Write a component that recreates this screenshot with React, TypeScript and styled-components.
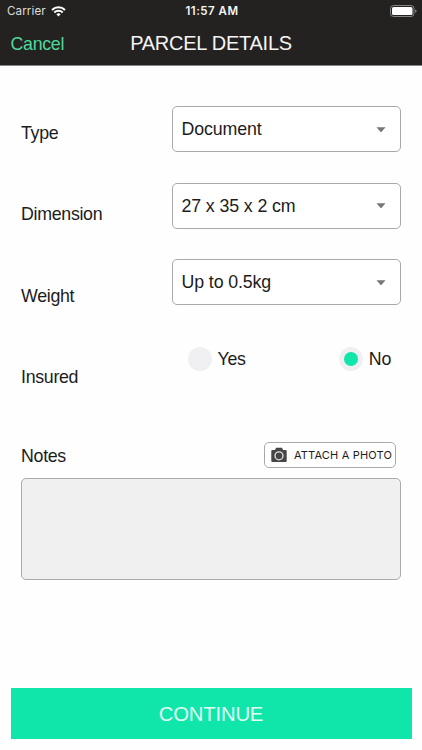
import React from "react";
import styled, { createGlobalStyle } from "styled-components";

const GlobalStyle = createGlobalStyle`
  * { box-sizing: border-box; }
  body {
    margin: 0;
    background: #fefefe;
    color: #1c1c1c;
    font-family: "Liberation Sans", Arial, sans-serif;
    font-size: 17.8px;
    letter-spacing: -0.3px;
  }
  button, textarea { font: inherit; color: inherit; letter-spacing: inherit; }
  svg { flex: none; }
`;

const Screen = styled.div`
  width: 422px;
  height: 750px;
  display: flex;
  flex-direction: column;
  overflow: hidden;
`;

const Header = styled.header`
  height: 66px;
  flex: none;
  background: #232221;
  border-bottom: 1px solid #858585;
  color: #f4f4f4;
`;

const StatusBar = styled.div`
  height: 22px;
  padding: 0 5px 0 7px;
  display: grid;
  grid-template-columns: 1fr auto 1fr;
  align-items: center;
  font-family: Inter, sans-serif;
  font-size: 11.6px;
`;

const Carrier = styled.div`
  display: flex;
  align-items: center;
  gap: 5px;
  letter-spacing: 0.1px;
  color: #dedede;
`;

const Time = styled.div`
  font-size: 11.5px;
  font-weight: 600;
  letter-spacing: 0.5px;
`;

const BatteryIcon = styled.svg`
  justify-self: end;
  display: block;
`;

const NavBar = styled.div`
  height: 43px;
  padding: 0 10px;
  display: grid;
  grid-template-columns: 1fr auto 1fr;
  align-items: center;
`;

const Cancel = styled.button`
  justify-self: start;
  padding: 1px 0 0 0.5px;
  border: 0;
  background: none;
  color: #50d79c;
`;

const Title = styled.h1`
  margin: 0;
  font-size: 20px;
  font-weight: 400;
  letter-spacing: -0.25px;
  white-space: nowrap;
`;

const Form = styled.main`
  flex: 1;
  padding: 40px 21px 0;
`;

const Columns = styled.div`
  height: 324px;
  display: grid;
  grid-template-columns: 150.5px 229.5px;
`;

const Labels = styled.div`
  display: grid;
  grid-auto-rows: 81.5px;
  align-content: start;
  padding-top: 16.6px;
  line-height: 20px;
`;

const Fields = styled.div`
  display: flex;
  flex-direction: column;
  gap: 30.5px;
  letter-spacing: -0.12px;
`;

const Select = styled.button`
  height: 46px;
  flex: none;
  padding: 1px 14px 0 9px;
  display: flex;
  align-items: center;
  justify-content: space-between;
  border: 1px solid #a9a9a9;
  border-radius: 5px;
  background: #fff;
  text-align: left;
`;

const RadioGroup = styled.div`
  display: flex;
  justify-content: space-between;
  padding: 0 10px 0 16px;
  margin-top: 10.5px;
`;

const Radio = styled.label`
  display: flex;
  align-items: center;
  gap: 6px;
  line-height: 26px;
  letter-spacing: -0.3px;
`;

const Dot = styled.span<{ $checked?: boolean }>`
  width: 24px;
  height: 24px;
  border-radius: 50%;
  border: 5px solid #f0f0f2;
  background: ${(p) => (p.$checked ? "#10e6aa" : "#f0f0f2")};
`;

const NotesHeader = styled.div`
  height: 48px;
  padding: 12px 5px 0 0;
  display: flex;
  align-items: flex-start;
  justify-content: space-between;
`;

const NotesLabel = styled.label`
  line-height: 28px;
`;

const AttachButton = styled.button`
  width: 132px;
  height: 26px;
  padding: 0 0 0 6px;
  display: flex;
  align-items: center;
  gap: 7px;
  border: 1px solid #aaa;
  border-radius: 5px;
  background: #fff;
  font-family: Inter, sans-serif;
  font-size: 11px;
  letter-spacing: 0.18px;
  white-space: nowrap;
`;

const Notes = styled.textarea`
  display: block;
  width: 380px;
  height: 102px;
  border: 1px solid #aaa;
  border-radius: 5px;
  background: #f0f0f0;
  resize: none;
`;

const Continue = styled.button`
  flex: none;
  height: 51px;
  margin: 0 10.5px 11px;
  padding: 2px 0 0;
  border: 0;
  background: #10e6aa;
  color: #e2fff4;
  font-size: 20.3px;
  letter-spacing: -0.2px;
`;

const Caret = () => (
  <svg width="10" height="6" viewBox="0 0 10 6">
    <path d="M0.5 0.3H9.5L5.6 4.8Q5 5.4 4.4 4.8Z" fill="#777" />
  </svg>
);

const Wifi = () => (
  <svg width="15" height="11" viewBox="0 0 15 11" fill="none" stroke="#fff" strokeWidth="2">
    <path d="M1 4A9.2 9.2 0 0 1 14 4M3.3 6.5A6 6 0 0 1 11.7 6.5" />
    <path d="M7.5 10.5L5.4 8.3A3 3 0 0 1 9.6 8.3Z" fill="#fff" stroke="none" />
  </svg>
);

const Battery = () => (
  <BatteryIcon width="27" height="12" viewBox="0 0 27 12">
    <rect x="0.5" y="0.5" width="23.5" height="11" rx="3" fill="none" stroke="#858585" />
    <rect x="2" y="2" width="20.5" height="8" rx="1.5" fill="#fff" />
    <path d="M25.2 4.2Q26.6 4.6 26.6 6T25.2 7.8Z" fill="#858585" />
  </BatteryIcon>
);

const Camera = () => (
  <svg width="16" height="16" viewBox="0 0 16 16">
    <path d="M1.4 3H4L5 0.7H11L12 3H14.6Q15.7 3 15.7 4.1V13.9Q15.7 15 14.6 15H1.4Q0.3 15 0.3 13.9V4.1Q0.3 3 1.4 3Z" fill="#464646" />
    <circle cx="8" cy="8.8" r="4" fill="#464646" stroke="#e4e4e4" strokeWidth="1.3" />
  </svg>
);

export default function App() {
  return (
    <Screen>
      <GlobalStyle />
      <Header>
        <StatusBar>
          <Carrier>Carrier <Wifi /></Carrier>
          <Time>11:57 AM</Time>
          <Battery />
        </StatusBar>
        <NavBar>
          <Cancel>Cancel</Cancel>
          <Title>PARCEL DETAILS</Title>
        </NavBar>
      </Header>
      <Form>
        <Columns>
          <Labels>
            {["Type", "Dimension", "Weight", "Insured"].map((name) => (
              <span key={name}>{name}</span>
            ))}
          </Labels>
          <Fields>
            {["Document", "27 x 35 x 2 cm", "Up to 0.5kg"].map((value) => (
              <Select key={value}>{value}<Caret /></Select>
            ))}
            <RadioGroup>
              <Radio><Dot />Yes</Radio>
              <Radio><Dot $checked />No</Radio>
            </RadioGroup>
          </Fields>
        </Columns>
        <NotesHeader>
          <NotesLabel htmlFor="notes">Notes</NotesLabel>
          <AttachButton><Camera />ATTACH A PHOTO</AttachButton>
        </NotesHeader>
        <Notes id="notes" />
      </Form>
      <Continue>CONTINUE</Continue>
    </Screen>
  );
}
